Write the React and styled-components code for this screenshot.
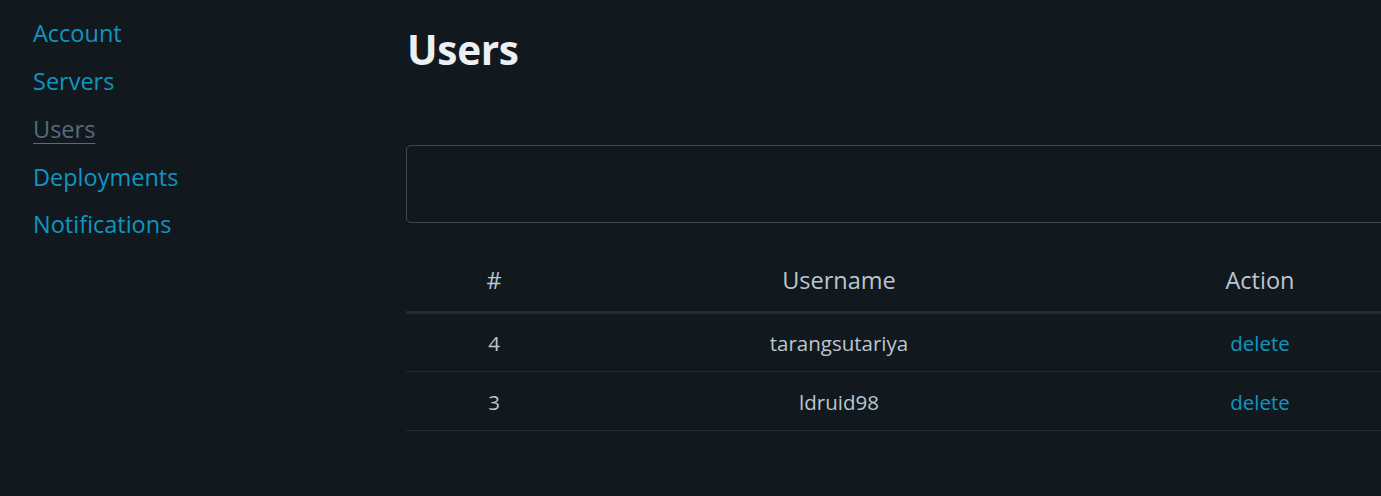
import React from "react";
import styled, { createGlobalStyle } from "styled-components";

const Global = createGlobalStyle`
  html, body { margin: 0; padding: 0; background: #11191f; overflow: hidden; }
  body {
    font-family: "Open Sans", "Noto Sans", sans-serif;
    font-size: 22px;
    color: #bbc6ce;
  }
  * { box-sizing: border-box; }
`;

const Page = styled.div`
  display: grid;
  grid-template-columns: 406px 1018px;
  width: 1424px;
  min-height: 496px;
`;

const Sidebar = styled.aside`
  padding: 9.5px 0 0 33px;
`;

const NavList = styled.ul`
  list-style: none;
  margin: 0;
  padding: 0;
`;

const NavItem = styled.li`
  height: 47.75px;
  display: flex;
  align-items: center;
  font-size: 23.5px;
`;

const NavLink = styled.a`
  color: ${(p) => (p.$current ? "#596b78" : "#1095c1")};
  text-decoration: ${(p) => (p.$current ? "underline" : "none")};
  text-decoration-thickness: 1px;
  text-underline-offset: 5px;
  cursor: pointer;
`;

const Main = styled.main`
  display: flex;
  flex-direction: column;
`;

const Title = styled.h1`
  margin: 0;
  height: 100px;
  display: flex;
  align-items: center;
  padding: 0 0 2px 1px;
  font-size: 40.5px;
  font-weight: 700;
  color: #edf0f3;
  letter-spacing: -0.3px;
`;

const Field = styled.input`
  margin-top: 45px;
  height: 78px;
  width: 100%;
  background: #11191f;
  border: 1px solid #374956;
  border-radius: 5px;
  color: #bbc6ce;
  font: inherit;
  padding: 0 20px;
  outline: none;
`;

const Table = styled.table`
  margin-top: 28px;
  width: 1018px;
  border-collapse: collapse;
  table-layout: fixed;
`;

const HeadCell = styled.th`
  height: 61px;
  font-size: 23.5px;
  font-weight: 400;
  text-align: center;
  color: #bbc6ce;
  border-bottom: 3px solid #1f2d38;
  padding: 0 0 1px;
  vertical-align: middle;
`;

const Cell = styled.td`
  height: 59px;
  font-size: 20.5px;
  text-align: center;
  border-bottom: 1px solid #1f2d38;
  padding: 2px 0 0;
  vertical-align: middle;
`;

const ActionLink = styled.a`
  color: #1095c1;
  text-decoration: none;
  cursor: pointer;
`;

const navItems = ["Account", "Servers", "Users", "Deployments", "Notifications"];
const users = [
  { id: 4, name: "tarangsutariya" },
  { id: 3, name: "ldruid98" },
];

export default function App() {
  return (
    <>
      <Global />
      <Page>
        <Sidebar>
          <nav>
            <NavList>
              {navItems.map((n) => (
                <NavItem key={n}>
                  <NavLink $current={n === "Users"}>{n}</NavLink>
                </NavItem>
              ))}
            </NavList>
          </nav>
        </Sidebar>
        <Main>
          <Title>Users</Title>
          <Field type="text" aria-label="username" />
          <Table>
            <colgroup>
              <col style={{ width: 176 }} />
              <col style={{ width: 514 }} />
              <col style={{ width: 328 }} />
            </colgroup>
            <thead>
              <tr>
                <HeadCell>#</HeadCell>
                <HeadCell>Username</HeadCell>
                <HeadCell>Action</HeadCell>
              </tr>
            </thead>
            <tbody>
              {users.map((u) => (
                <tr key={u.id}>
                  <Cell>{u.id}</Cell>
                  <Cell>{u.name}</Cell>
                  <Cell>
                    <ActionLink>delete</ActionLink>
                  </Cell>
                </tr>
              ))}
            </tbody>
          </Table>
        </Main>
      </Page>
    </>
  );
}
